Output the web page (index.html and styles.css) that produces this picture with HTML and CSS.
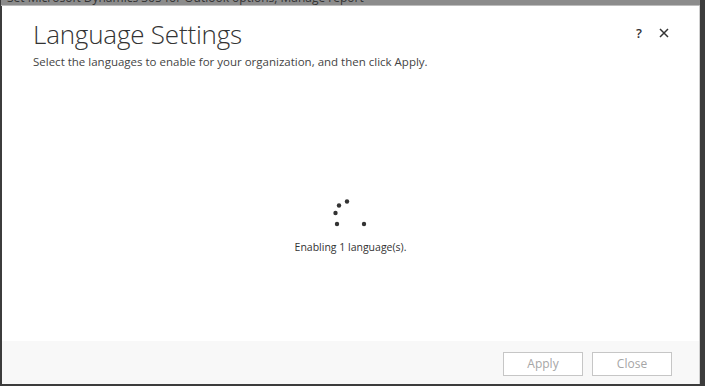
FILE: index.html
```html
<!DOCTYPE html>
<html>
<head>
<meta charset="utf-8">
<link rel="stylesheet" href="styles.css">
</head>
<body>
<div class="backdrop">
  <div class="topstrip"><span>Set Microsoft Dynamics 365 for Outlook options, Manage report</span></div>
  <div class="dialog">
    <div class="header">
      <div class="titles">
        <h1 class="title">Language Settings</h1>
        <p class="subtitle">Select the languages to enable for your organization, and then click Apply.</p>
      </div>
      <div class="actions">
        <span class="help">?</span>
        <svg class="close-icon" width="10" height="10" viewBox="0 0 10 10"><path d="M1 1 L9 9 M9 1 L1 9" stroke="#333" stroke-width="1.5" fill="none"/></svg>
      </div>
    </div>
    <div class="body">
      <svg class="spinner" width="40" height="30" viewBox="0 0 40 30">
        <circle cx="14" cy="2.5" r="2.2" fill="#333"/>
        <circle cx="6" cy="6.5" r="2.2" fill="#333"/>
        <circle cx="2.5" cy="14" r="2.2" fill="#333"/>
        <circle cx="4" cy="25" r="2.2" fill="#333"/>
        <circle cx="31" cy="25" r="2.2" fill="#333"/>
      </svg>
      <div class="status">Enabling 1 language(s).</div>
    </div>
    <div class="footer">
      <button class="btn">Apply</button>
      <button class="btn">Close</button>
    </div>
  </div>
</div>
</body>
</html>
```
FILE: styles.css
```css
html, body {
  margin: 0;
  padding: 0;
}
body {
  width: 705px;
  height: 386px;
  overflow: hidden;
  background: #3c3c3c;
  font-family: "Open Sans", "Segoe UI", sans-serif;
}
.backdrop {
  display: flex;
  flex-direction: column;
  height: 384px;
}
.topstrip {
  height: 5px;
  background: #8c8c8c;
  overflow: hidden;
  margin-left: 1px;
  margin-right: 5px;
  border-bottom: 1px solid #bdbdbd;
}
.topstrip span {
  display: block;
  font-size: 12px;
  line-height: 12px;
  margin-top: -8px;
  padding-left: 6px;
  color: #333;
  white-space: nowrap;
}
.dialog {
  flex: 1;
  margin-left: 2px;
  width: 697px;
  background: #fff;
  border-right: 1px solid #d0d0d0;
  display: flex;
  flex-direction: column;
}
.header {
  display: flex;
  justify-content: space-between;
  padding: 12px 30px 0 31px;
}
.title {
  margin: 0;
  font-weight: 300;
  font-size: 26px;
  line-height: 32px;
  color: #333;
  letter-spacing: -0.2px;
}
.subtitle {
  margin: 4px 0 0;
  font-size: 11.5px;
  line-height: 16px;
  color: #444;
}
.actions {
  display: flex;
  align-items: center;
  gap: 17px;
  height: 24px;
  margin-top: 3px;
}
.help {
  font-size: 13px;
  font-weight: 600;
  color: #333;
}
.body {
  flex: 1;
  display: flex;
  flex-direction: column;
  align-items: center;
  padding-top: 129px;
}
.spinner {
  display: block;
  margin-left: 4px;
}
.status {
  margin-top: 11px;
  font-size: 10.5px;
  color: #333;
}
.footer {
  height: 43px;
  background: #f8f8f8;
  display: flex;
  justify-content: flex-end;
  align-items: center;
  gap: 9px;
  padding-right: 27px;
}
.btn {
  width: 80px;
  height: 24px;
  margin-top: 2px;
  background: #fff;
  border: 1px solid #c6c6c6;
  color: #a6a6a6;
  font-family: "Open Sans", sans-serif;
  font-size: 12px;
  padding: 0;
}
```
